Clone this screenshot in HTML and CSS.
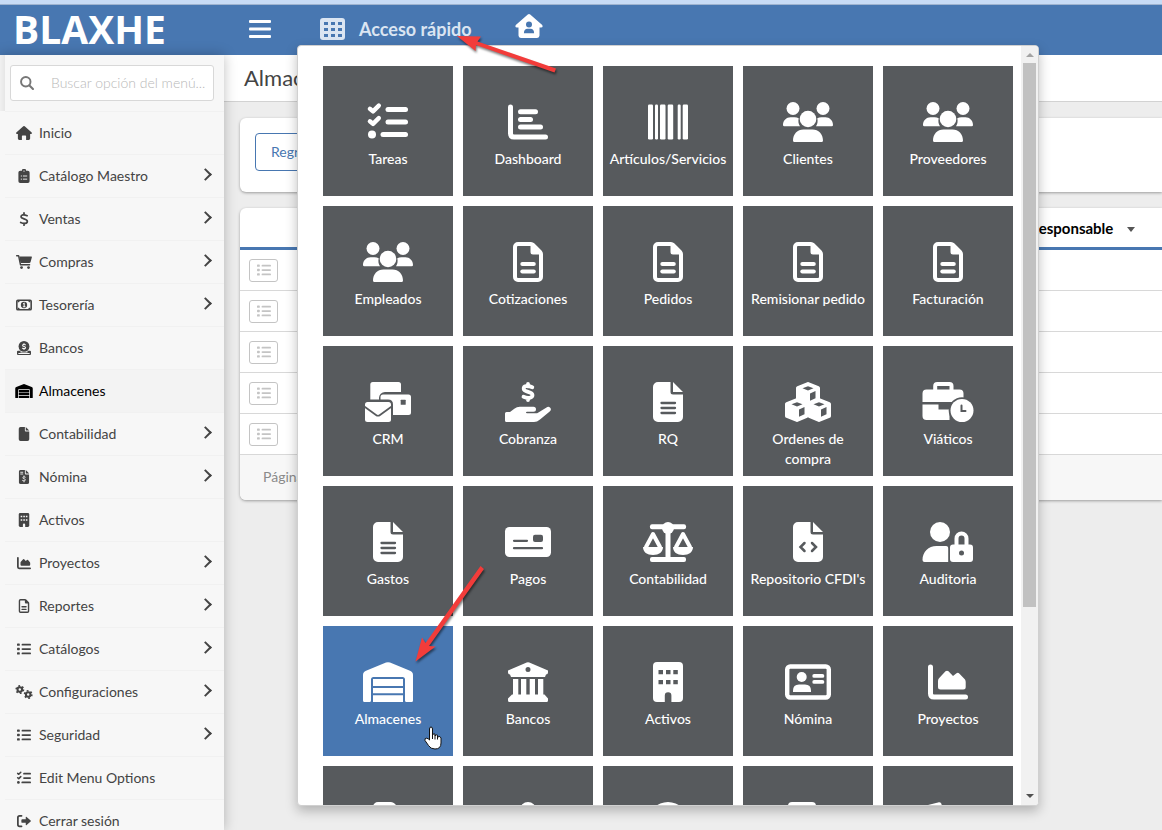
FILE: index.html
```html
<!DOCTYPE html>
<html lang="es">
<head>
  <meta charset="UTF-8">
  <meta name="viewport" content="width=device-width, initial-scale=1.0">
  <title>BLAXHE - Almacenes</title>
  <link rel="stylesheet" href="styles.css">
</head>
<body>
  <!-- iconos -->
  <svg class="sprite" aria-hidden="true">
    <symbol id="tasks" viewBox="0 0 40 40"><path class="line" stroke-width="4.4" d="M1.9 6.8L5 9.4 10.8 3.6M1.9 19.3L5 21.9 10.8 16.1"/><circle cx="4" cy="32.5" r="4"/><rect x="17.5" y="5" width="22.5" height="5" rx="2.5"/><rect x="17.5" y="17.5" width="22.5" height="5" rx="2.5"/><rect x="12.5" y="30" width="27.5" height="5" rx="2.5"/></symbol>
    <symbol id="chart-bar" viewBox="0 0 40 40"><path class="line" stroke-width="5" d="M2.5 5V31.5q0 3.5 3.5 3.5H37.5"/><rect x="10" y="7.3" width="20" height="5" rx="2.5"/><rect x="10" y="15" width="15" height="5" rx="2.5"/><rect x="10" y="22.5" width="25" height="5" rx="2.5"/></symbol>
    <symbol id="barcode" viewBox="0 0 40 40"><rect y="2.5" width="5" height="35" rx="1.2"/><rect x="7" y="2.5" width="3" height="35" rx="1.2"/><rect x="12" y="2.5" width="5.5" height="35" rx="1.2"/><rect x="19.7" y="2.5" width="5.5" height="35" rx="1.2"/><rect x="29.7" y="2.5" width="3" height="35" rx="1.2"/><rect x="34.7" y="2.5" width="5.3" height="35" rx="1.2"/></symbol>
    <symbol id="users" viewBox="0 0 50 40"><circle cx="10" cy="6.5" r="6.5"/><circle cx="40" cy="6.5" r="6.5"/><circle cx="25" cy="17" r="8.3"/><path d="M0 23C0 18.5 3.5 15.3 7.5 15.3h4c1.6 0 3 .3 4.2.9C15 19.5 15.5 22 17 24.3H1.3Q0 24.3 0 23ZM50 23C50 18.5 46.5 15.3 42.5 15.3h-4c-1.6 0-3 .3-4.2.9C35 19.5 34.5 22 33 24.3H48.7Q50 24.3 50 23ZM10 38.5C10 32 14.5 27.5 20.5 27.5h9C35.5 27.5 40 32 40 38.5q0 1.5-1.5 1.5h-27Q10 40 10 38.5Z"/></symbol>
    <symbol id="file-lines" viewBox="0 0 30 40"><path fill-rule="evenodd" d="M5 0H18Q20 0 21.5 1.5L28.5 8.5Q30 10 30 12V35a5 5 0 0 1-5 5H5a5 5 0 0 1-5-5V5a5 5 0 0 1 5-5ZM5 4Q4 4 4 5V35q0 1 1 1H25q1 0 1-1V12.5H20a2.5 2.5 0 0 1-2.5-2.5V4Z"/><rect x="7.3" y="20" width="15.5" height="4" rx="2"/><rect x="7.3" y="27.5" width="15.5" height="4" rx="2"/></symbol>
    <symbol id="file" viewBox="0 0 30 40"><path d="M5 0H17.5V10a2.5 2.5 0 0 0 2.5 2.5H30V35a5 5 0 0 1-5 5H5a5 5 0 0 1-5-5V5a5 5 0 0 1 5-5ZM20 0L30 10H20Z"/></symbol>
    <symbol id="file-text" viewBox="0 0 30 40"><use href="#file"/><path class="cut" stroke-width="2.3" d="M8.5 21h13.5M8.5 26h13.5M8.5 31h13.5"/></symbol>
    <symbol id="file-code" viewBox="0 0 30 40"><use href="#file"/><path class="cut" stroke-width="2.5" d="M11.5 21L7.5 25 11.5 29M19 21L23 25 19 29"/></symbol>
    <symbol id="file-dollar" viewBox="0 0 30 40"><use href="#file"/><path class="cut" stroke-width="2.5" d="M5.5 6.5h6M5.5 11.5h6M18.5 20.5c-4-1.5-7-.5-7 2 0 3 7.5 2 7.5 5.5 0 3-4 3.5-8 2M15 17v3M15 31v3"/></symbol>
    <symbol id="mails" viewBox="0 0 46 40"><path d="M7.8 0H33.5Q36 0 36 2.5V10H20a6 6 0 0 0-6 6v1.5H5.3V2.5Q5.3 0 7.8 0Z"/><path d="M18 12.5H43.5q2.5 0 2.5 2.5V30.5q0 2.5-2.5 2.5H28V22.5q0-5-5-5H15.5V15q0-2.5 2.5-2.5Z"/><rect y="20" width="26" height="20" rx="2.5"/><path class="cut" stroke-width="1.7" d="M0 25L11 33q2 1.5 4 0L26 25"/><rect class="hole" x="35.7" y="17.7" width="5" height="5" rx=".5"/></symbol>
    <symbol id="hand-dollar" viewBox="0 0 46 40"><path class="line" stroke-width="3.8" d="M27.3 5.3C22 3 18.5 4 18.7 6.8c.2 3.7 8.8 2.5 8.8 6.3 0 3-4.5 3.7-9 1.7M23 1.9v2.5M23 16v2.1"/><path d="M0 31.5Q0 30 1.5 30H5l4.3-3.3q2.5-2 5.5-2H28.5q2.5 0 2.5 2.5t-2.5 2.5H22q-1 0-1 .8t1 .8H31q1.2 0 2-.6L41.5 25.5q2-1.4 3.7.3 1.6 2-.5 3.7L35 37.5q-3 2.5-6 2.5H1.5Q0 40 0 38.5Z"/></symbol>
    <symbol id="cubes" viewBox="0 0 46 40"><path class="solid" stroke-width="4" d="M23 2L33 6V17L23 21 13 17V6ZM12 18L21.5 22V34L12 38 2 34V22ZM34 18L44 22V34L34 38 24.5 34V22Z"/><path class="hole" d="M17.5 6.3L23 4.2 28.5 6.3 23 8.6ZM25 11.5L30.5 9V16.3L25 18.7ZM6.5 22.3L12 20.2 17.5 22.3 12 24.6ZM14 27.5L19.5 25V32.3L14 34.7ZM28.5 22.3L34 20.2 39.5 22.3 34 24.6ZM36 27.5L41.5 25V32.3L36 34.7Z"/></symbol>
    <symbol id="briefcase" viewBox="0 0 51 40"><path fill-rule="evenodd" d="M10.7 7.6V4Q10.7 0 14.7 0H27Q31 0 31 4V7.6H37q4 0 4 4V20H0V11.6q0-4 4-4ZM14.7 4V7.6H27V4ZM0 22.5H16V27.5H27V38H4q-4 0-4-4Z"/><circle class="hole" cx="39.5" cy="28.5" r="13.3"/><circle cx="39.5" cy="28.5" r="11.5"/><path class="cut" stroke-width="2" d="M39 23.5V29H43"/></symbol>
    <symbol id="check-card" viewBox="0 0 46 40"><rect y="5" width="46" height="30" rx="4.5"/><path class="cut" stroke-width="2.2" d="M9 18.8H22M9 26.2H37"/><rect class="hole" x="28" y="12.7" width="10" height="7.3" rx="2"/></symbol>
    <symbol id="scale" viewBox="0 0 50 40"><rect x="7" y="2.2" width="36" height="5" rx="2"/><circle cx="25" cy="6" r="6"/><rect x="22.5" y="8" width="5" height="29"/><rect x="7" y="35" width="36" height="5" rx="2"/><path class="line" stroke-width="4" d="M3 25L10 12 17 25M33 25L40 12 47 25"/><path d="M0 25H20C20 30 16 33 10 33S0 30 0 25ZM30 25H50C50 30 46 33 40 33S30 30 30 25Z"/></symbol>
    <symbol id="user-lock" viewBox="0 0 51 40"><circle cx="17.5" cy="10" r="10"/><path d="M0 38C0 30 6 24 14 24H23.5Q26 24 25.7 27V40H2Q0 40 0 38Z"/><path class="line" stroke-width="4" d="M34 24V16.5a5 5 0 0 1 10 0V24"/><rect x="27.5" y="22.5" width="23" height="17.5" rx="3"/><circle class="hole" cx="39" cy="31" r="2.5"/></symbol>
    <symbol id="warehouse" viewBox="0 0 50 40"><path d="M0 38.5V13Q0 10 3 8.8L23 .6Q25-.2 27 .6L47 8.8Q50 10 50 13V38.5Q50 40 48.5 40H43.5Q42 40 42 38.5V17.5Q42 15 39.5 15H10.5Q8 15 8 17.5V38.5Q8 40 6.5 40H1.5Q0 40 0 38.5ZM10 17H40V24H10ZM10 26H40V31.3H10ZM10 33.3H40V40H10Z"/></symbol>
    <symbol id="bank" viewBox="0 0 40 40"><path fill-rule="evenodd" d="M0 8.5L18.7.5Q20 0 21.3.5L40 8.5V10.5Q40 12.5 38 12.5L37 15H3L2 12.5Q0 12.5 0 10.5ZM20 5a2.5 2.5 0 1 0 0 5 2.5 2.5 0 0 0 0-5Z"/><path d="M5 17h5.3V33H5ZM13 17h5.3V33H13ZM21.7 17H27V33H21.7ZM30 17h5.3V33H30ZM4 32.5H36.5L40 36.5V38.5q0 1.5-1.5 1.5h-37Q0 40 0 38.5V36.5Z"/></symbol>
    <symbol id="building" viewBox="0 0 30 40"><rect width="30" height="40" rx="4"/><path class="hole" d="M5.5 8h4.5v4.2H5.5ZM13 8h4.5v4.2H13ZM20.3 8h4.5v4.2H20.3ZM5.5 18h4.5v4.2H5.5ZM13 18h4.5v4.2H13ZM20.3 18h4.5v4.2H20.3ZM11.8 40V33.5a3.3 3.3 0 0 1 6.6 0V40Z"/></symbol>
    <symbol id="id-card" viewBox="0 0 46 40"><rect class="line" x="2.2" y="4.5" width="41.6" height="31" rx="3" stroke-width="4.4"/><circle cx="16.7" cy="15" r="5"/><path d="M8 28.5Q8 22.5 14 22.5H20Q26 22.5 26 28.5V30H8Z"/><rect x="27.3" y="12" width="12" height="3.8" rx="1.9"/><rect x="27.3" y="18" width="12" height="3.8" rx="1.9"/></symbol>
    <symbol id="chart-area" viewBox="0 0 40 40"><path class="line" stroke-width="5" d="M2.5 5V31.5q0 3.5 3.5 3.5H37.5"/><path d="M10 19q0-1.5 1-2.8L17.5 9.3q1.5-1.3 3 0L25 14 28.5 11.2q1.5-1 3 .5L37 17.5q.7 1 .7 2.5V25q0 2.5-2.5 2.5H12.5Q10 27.5 10 25Z"/></symbol>
    <symbol id="user" viewBox="0 0 34 40"><circle cx="17" cy="8" r="8"/><path d="M0 40Q0 20 17 20T34 40Z"/></symbol>
    <symbol id="globe" viewBox="0 0 40 40"><circle cx="20" cy="20" r="20"/></symbol>
    <symbol id="calc" viewBox="0 0 40 40"><rect x="0" width="28" height="40" rx="4"/></symbol>
    <symbol id="tag" viewBox="0 0 40 40"><path d="M0 3L11 .2Q13 0 13.5 2L18 40H5Z"/></symbol>
    <symbol id="home" viewBox="0 0 46 40"><path d="M21 .8Q23-.8 25 .8L45 18.5Q47 22.5 43 22.5H40.5V36q0 4-4 4H29V29q0-2-2-2H19q-2 0-2 2V40H9.5q-4 0-4-4V22.5H3Q-1 22.5 1 18.5Z"/></symbol>
    <symbol id="home-user" viewBox="0 0 46 40"><path d="M21 .8Q23-.8 25 .8L45 18.5Q47 22.5 43 22.5H40.5V36q0 4-4 4H9.5q-4 0-4-4V22.5H3Q-1 22.5 1 18.5Z"/><circle class="hole" cx="23" cy="17.5" r="5"/><path class="hole" d="M14.5 32Q14.5 24.5 20.5 24.5H25.5Q31.5 24.5 31.5 32Z"/></symbol>
    <symbol id="clipboard" viewBox="0 0 32 40"><path d="M5 5H10a6 6 0 0 1 12 0H27q5 0 5 5V35q0 5-5 5H5q-5 0-5-5V10Q0 5 5 5Z"/><circle class="hole" cx="16" cy="6" r="2"/><path class="cut" stroke-width="2.6" d="M8 20h1M14 20h10M8 29h1M14 29h10"/></symbol>
    <symbol id="dollar" viewBox="0 0 26 40"><path class="line" stroke-width="5" d="M22 10.5C12 6 4.5 8 4.5 13.5c0 7 18 5 18 13 0 7-9 8-19 3.5M13 2.5V8M13 32v5.5"/></symbol>
    <symbol id="cart" viewBox="0 0 46 40"><path class="line" stroke-width="4" d="M2 2H7.5L13 28H39"/><path d="M9.5 4H44q2 0 1.7 2L42 19.5Q41.3 23 38 23H13Z"/><circle cx="16" cy="36" r="4"/><circle cx="36" cy="36" r="4"/></symbol>
    <symbol id="money" viewBox="0 0 46 40"><rect class="line" x="2.5" y="6.5" width="41" height="27" rx="3" stroke-width="4.5"/><circle cx="23" cy="20" r="9"/><path d="M5 8h6q0 5-6 5ZM41 8h-6q0 5 6 5ZM5 32h6q0-5-6-5ZM41 32h-6q0-5 6-5Z"/><path class="cut" stroke-width="3" d="M21.5 16.5L23.5 15.5V24M21 25h5"/></symbol>
    <symbol id="coin" viewBox="0 0 40 40"><path d="M3 28H10V33H30V28H37q3 0 3 3V37q0 3-3 3H3q-3 0-3-3V31q0-3 3-3Z"/><circle cx="20" cy="15.5" r="15.5"/><path class="cut" stroke-width="3" d="M24 11c-5-2-8-1-8 1.5 0 4 8.5 2.5 8.5 6.5 0 3-4.5 3.5-9 1.5M20 7v3M20 21v3M5 35.5H35"/></symbol>
    <symbol id="list" viewBox="0 0 40 40"><rect y="4" width="8" height="7" rx="2"/><rect y="16.5" width="8" height="7" rx="2"/><rect y="29" width="8" height="7" rx="2"/><rect x="13" y="5" width="27" height="5" rx="2.5"/><rect x="13" y="17.5" width="27" height="5" rx="2.5"/><rect x="13" y="30" width="27" height="5" rx="2.5"/></symbol>
    <symbol id="gears" viewBox="0 0 50 40"><circle class="line" cx="13" cy="13" r="6.5" stroke-width="6"/><circle class="teeth" cx="13" cy="13" r="10.5" stroke-width="4.5"/><circle class="line" cx="37" cy="27" r="6.5" stroke-width="6"/><circle class="teeth" cx="37" cy="27" r="10.5" stroke-width="4.5"/></symbol>
    <symbol id="logout" viewBox="0 0 40 40"><path class="line" stroke-width="5" d="M13 5H7.5Q2.5 5 2.5 10V30Q2.5 35 7.5 35H13"/><path d="M25 8.5Q26 7.5 27.5 8.5L39 18.5Q40.5 20 39 21.5L27.5 31.5Q25 33 25 30V25H15q-2.5 0-2.5-2.5v-5Q12.5 15 15 15H25Z"/></symbol>
    <symbol id="search" viewBox="0 0 40 40"><circle class="line" cx="16.5" cy="16.5" r="13.5" stroke-width="5.5"/><path class="line" stroke-width="6" d="M27 27L37 37"/></symbol>
    <symbol id="grid" viewBox="0 0 25 22"><rect width="25" height="22" rx="3"/><path class="hole" d="M4 4h4v3H4ZM11 4h4v3h-4ZM18 4h4v3h-4ZM4 10h4v3H4ZM11 10h4v3h-4ZM18 10h4v3h-4ZM4 16h4v3H4ZM11 16h4v3h-4ZM18 16h4v3h-4Z"/></symbol>
    <symbol id="bars" viewBox="0 0 22 18"><rect width="22" height="3" rx="1"/><rect y="7.5" width="22" height="3" rx="1"/><rect y="15" width="22" height="3" rx="1"/></symbol>
  </svg>

  <header class="topbar">
    <a href="#" class="logo">BLAXHE</a>
    <button type="button" class="menu-btn" aria-label="Menú"><svg><use href="#bars"/></svg></button>
    <button type="button" class="quick-btn"><svg><use href="#grid"/></svg>Acceso rápido</button>
    <a href="#" class="home-btn" aria-label="Inicio"><svg><use href="#home-user"/></svg></a>
  </header>

  <div class="layout">
    <aside class="sidebar">
      <div class="search">
        <label for="buscar" aria-label="Buscar"><svg><use href="#search"/></svg></label>
        <input type="text" id="buscar" placeholder="Buscar opción del menú...">
      </div>
      <nav class="menu">
        <a href="#"><svg><use href="#home"/></svg>Inicio</a>
        <a href="#" class="sub"><svg><use href="#clipboard"/></svg>Catálogo Maestro</a>
        <a href="#" class="sub"><svg><use href="#dollar"/></svg>Ventas</a>
        <a href="#" class="sub"><svg><use href="#cart"/></svg>Compras</a>
        <a href="#" class="sub"><svg><use href="#money"/></svg>Tesorería</a>
        <a href="#"><svg><use href="#coin"/></svg>Bancos</a>
        <a href="#" class="active"><svg><use href="#warehouse"/></svg>Almacenes</a>
        <a href="#" class="sub"><svg><use href="#file"/></svg>Contabilidad</a>
        <a href="#" class="sub"><svg><use href="#file-dollar"/></svg>Nómina</a>
        <a href="#"><svg><use href="#building"/></svg>Activos</a>
        <a href="#" class="sub"><svg><use href="#chart-area"/></svg>Proyectos</a>
        <a href="#" class="sub"><svg><use href="#file-lines"/></svg>Reportes</a>
        <a href="#" class="sub"><svg><use href="#list"/></svg>Catálogos</a>
        <a href="#" class="sub"><svg><use href="#gears"/></svg>Configuraciones</a>
        <a href="#" class="sub"><svg><use href="#list"/></svg>Seguridad</a>
        <a href="#"><svg><use href="#tasks"/></svg>Edit Menu Options</a>
        <a href="#"><svg><use href="#logout"/></svg>Cerrar sesión</a>
      </nav>
    </aside>

    <main class="content">
      <h1>Almacenes</h1>
      <section class="card toolbar">
        <button type="button" class="back-btn">Regresar</button>
      </section>
      <section class="card">
        <table>
          <thead>
            <tr><th></th><th class="col-resp">Responsable <span class="caret"></span></th></tr>
          </thead>
          <tbody>
            <tr><td><button type="button" class="row-btn" aria-label="Opciones"><svg><use href="#list"/></svg></button></td><td></td></tr>
            <tr><td><button type="button" class="row-btn" aria-label="Opciones"><svg><use href="#list"/></svg></button></td><td></td></tr>
            <tr><td><button type="button" class="row-btn" aria-label="Opciones"><svg><use href="#list"/></svg></button></td><td></td></tr>
            <tr><td><button type="button" class="row-btn" aria-label="Opciones"><svg><use href="#list"/></svg></button></td><td></td></tr>
            <tr><td><button type="button" class="row-btn" aria-label="Opciones"><svg><use href="#list"/></svg></button></td><td></td></tr>
          </tbody>
        </table>
        <div class="pager">Página</div>
      </section>
    </main>
  </div>

  <!-- panel de acceso rápido -->
  <div class="quick-panel">
    <div class="tiles">
      <a href="#" class="tile"><svg><use href="#tasks"/></svg>Tareas</a>
      <a href="#" class="tile"><svg><use href="#chart-bar"/></svg>Dashboard</a>
      <a href="#" class="tile"><svg><use href="#barcode"/></svg>Artículos/Servicios</a>
      <a href="#" class="tile"><svg><use href="#users"/></svg>Clientes</a>
      <a href="#" class="tile"><svg><use href="#users"/></svg>Proveedores</a>
      <a href="#" class="tile"><svg><use href="#users"/></svg>Empleados</a>
      <a href="#" class="tile"><svg><use href="#file-lines"/></svg>Cotizaciones</a>
      <a href="#" class="tile"><svg><use href="#file-lines"/></svg>Pedidos</a>
      <a href="#" class="tile"><svg><use href="#file-lines"/></svg>Remisionar pedido</a>
      <a href="#" class="tile"><svg><use href="#file-lines"/></svg>Facturación</a>
      <a href="#" class="tile"><svg><use href="#mails"/></svg>CRM</a>
      <a href="#" class="tile"><svg><use href="#hand-dollar"/></svg>Cobranza</a>
      <a href="#" class="tile"><svg><use href="#file-text"/></svg>RQ</a>
      <a href="#" class="tile"><svg><use href="#cubes"/></svg>Ordenes de<br>compra</a>
      <a href="#" class="tile"><svg><use href="#briefcase"/></svg>Viáticos</a>
      <a href="#" class="tile"><svg><use href="#file-text"/></svg>Gastos</a>
      <a href="#" class="tile"><svg><use href="#check-card"/></svg>Pagos</a>
      <a href="#" class="tile"><svg><use href="#scale"/></svg>Contabilidad</a>
      <a href="#" class="tile"><svg><use href="#file-code"/></svg>Repositorio CFDI's</a>
      <a href="#" class="tile"><svg><use href="#user-lock"/></svg>Auditoria</a>
      <a href="#" class="tile current"><svg><use href="#warehouse"/></svg>Almacenes</a>
      <a href="#" class="tile"><svg><use href="#bank"/></svg>Bancos</a>
      <a href="#" class="tile"><svg><use href="#building"/></svg>Activos</a>
      <a href="#" class="tile"><svg><use href="#id-card"/></svg>Nómina</a>
      <a href="#" class="tile"><svg><use href="#chart-area"/></svg>Proyectos</a>
      <a href="#" class="tile"><svg><use href="#file-lines"/></svg></a>
      <a href="#" class="tile"><svg><use href="#user"/></svg></a>
      <a href="#" class="tile"><svg><use href="#globe"/></svg></a>
      <a href="#" class="tile"><svg><use href="#calc"/></svg></a>
      <a href="#" class="tile"><svg><use href="#tag"/></svg></a>
    </div>
    <div class="scrollbar">
      <span class="up"></span>
      <span class="thumb"></span>
      <span class="down"></span>
    </div>
  </div>

  <!-- flechas y cursor -->
  <svg class="arrow arrow-top" viewBox="0 0 110 50"><path d="M7 6L31 6.5 27.5 11.5 106 38.5 104.5 42.5 26 15 25.5 21Z"/></svg>
  <svg class="arrow arrow-tile" viewBox="0 0 80 105"><path d="M5.5 101.5L12 77.5 15.5 83 70.5 6 74 9 19 86 25.5 86.5Z"/></svg>
  <svg class="cursor" viewBox="0 0 18 24"><path d="M5.5 14V3Q5.5 1 7 1T8.5 3V9.5Q9 7 11 8V10Q12 8 13.5 9.2V11Q16.5 9.5 17 12V17Q17 23 11 23 6.5 23 4.5 19.5L1 14.5Q.5 12 2.5 12.2Q4.5 12.5 5.5 14Z"/><path d="M8.5 9v4M11 9.5v4M13.5 10.5v3"/></svg>
</body>
</html>
```
FILE: styles.css
```css
* {
  box-sizing: border-box;
}
body {
  --hole: #f7f7f7;
  display: flex;
  flex-direction: column;
  height: 100vh;
  margin: 0;
  overflow: hidden;
  position: relative;
  font-family: Lato, "Open Sans", sans-serif;
  font-size: 14px;
  line-height: 20px;
  color: #444;
  background-color: #ededed;
}
a {
  color: inherit;
  text-decoration: none;
}
button {
  font: inherit;
  cursor: pointer;
}
svg {
  display: block;
  flex: none;
  fill: currentColor;
}
.sprite {
  position: absolute;
  width: 0;
  height: 0;
}
.line {
  fill: none;
  stroke: currentColor;
  stroke-linecap: round;
  stroke-linejoin: round;
}
.teeth {
  fill: none;
  stroke: currentColor;
  stroke-dasharray: 5 6;
}
.solid {
  stroke: currentColor;
  stroke-linejoin: round;
}
.hole {
  fill: var(--hole);
}
.cut {
  fill: none;
  stroke: var(--hole);
  stroke-linecap: round;
}

/* barra superior */
.topbar {
  --hole: #4877b1;
  display: flex;
  flex: none;
  align-items: center;
  height: 55px;
  padding: 0 0 2px 13px;
  border-top: 4px solid #c8dbf5;
  background-color: #4877b1;
  box-shadow: inset 0 1px #9fb3cf;
  color: #fff;
}
.logo {
  width: 236px;
  font-family: "Open Sans", sans-serif;
  font-size: 39px;
  font-weight: bold;
  line-height: 48px;
}
.menu-btn, .quick-btn {
  padding: 0;
  border: none;
  background: none;
  color: #fff;
}
.menu-btn {
  margin-right: 49px;
}
.menu-btn svg {
  width: 22px;
  height: 18px;
}
.quick-btn {
  display: flex;
  align-items: center;
  gap: 14px;
  width: 195px;
  color: #dbe5f2;
  font-size: 18px;
  font-weight: bold;
}
.quick-btn svg {
  width: 25px;
  height: 22px;
}
.home-btn svg {
  width: 28px;
  height: 24px;
  margin-bottom: 5px;
}

.layout {
  display: flex;
  flex: 1;
  min-height: 0;
}

/* menú lateral */
.sidebar {
  flex: none;
  width: 224px;
  overflow: hidden;
  background: linear-gradient(to right, #f0f0f0, #e6e6e6) no-repeat 0 0 / 5px 56px #f7f7f7;
  box-shadow: 0 0 12px rgba(0, 0, 0, 0.25);
  z-index: 1;
}
.search {
  display: flex;
  align-items: center;
  height: 36px;
  margin: 10px 10px;
  padding-left: 9px;
  border: 1px solid #d8d8d8;
  border-radius: 3px;
  background-color: #fff;
}
.search svg {
  width: 14px;
  height: 14px;
  color: #777;
}
.search input {
  flex: 1;
  min-width: 0;
  padding: 0 0 0 17px;
  border: none;
  outline: none;
  background: none;
  font: inherit;
}
.search input::placeholder {
  color: #b8b8b8;
  font-weight: 300;
}
.menu {
  margin-left: 5px;
}
.menu a {
  display: flex;
  align-items: center;
  height: 43px;
  padding: 0 13px 0 9px;
  border-top: 1px solid #f1f1f1;
}
.menu svg {
  width: 20px;
  height: 14px;
  margin-right: 5px;
}
.menu .active {
  background-color: #f3f3f3;
  color: #000;
}
.menu .sub::after {
  content: "";
  width: 7px;
  height: 7px;
  margin: 0 1px 4px auto;
  border: solid #444;
  border-width: 2px 2px 0 0;
  transform: rotate(45deg);
}

/* contenido */
.content {
  flex: 1;
  min-width: 0;
}
h1 {
  margin: 0 0 16px;
  padding: 8px 20px;
  border-bottom: 1px solid #d2d2d2;
  background-color: #fff;
  font-size: 22px;
  font-weight: normal;
  line-height: 30px;
}
.card {
  margin: 0 0 16px 16px;
  overflow: hidden;
  border-radius: 6px 0 0 6px;
  background-color: #fff;
  box-shadow: 0 1px 3px rgba(0, 0, 0, 0.35);
}
.toolbar {
  padding: 15px 15px 21px;
}
.back-btn {
  height: 38px;
  padding: 0 15px;
  border: 1px solid #4877b1;
  border-radius: 4px;
  background-color: #fff;
  color: #4877b1;
}
table {
  width: 100%;
  border-collapse: separate;
  border-spacing: 0;
}
th {
  height: 42px;
  padding: 0;
  border-bottom: 3px solid #4877b1;
  color: #000;
  font-size: 15px;
}
.col-resp {
  width: 142px;
  padding-right: 27px;
  text-align: right;
}
.caret {
  display: inline-block;
  margin-left: 10px;
  border: 4px solid transparent;
  border-top: 5px solid #555;
  border-bottom: none;
  vertical-align: middle;
}
td {
  height: 41px;
  padding: 0 9px;
  border-bottom: 1px solid #d8d8d8;
}
.row-btn {
  display: flex;
  align-items: center;
  justify-content: center;
  width: 29px;
  height: 23px;
  padding: 0;
  border: 1px solid #c4c4c4;
  border-radius: 3px;
  background-color: #fff;
  color: #c4c4c4;
}
.row-btn svg {
  width: 14px;
  height: 14px;
}
.pager {
  padding: 12px 23px 13px;
  background-color: #f7f7f7;
  color: #8a8a8a;
}

/* acceso rápido */
.quick-panel {
  position: absolute;
  top: 45px;
  bottom: 24px;
  left: 297px;
  display: flex;
  overflow: hidden;
  border: 1px solid #d0d0d0;
  border-radius: 4px;
  background-color: #fff;
  box-shadow: 0 5px 12px rgba(0, 0, 0, 0.25);
  z-index: 2;
}
.tiles {
  --hole: #575a5d;
  display: grid;
  grid-template-columns: repeat(5, 130px);
  grid-auto-rows: 130px;
  gap: 10px;
  padding: 20px 8px 0 25px;
}
.tile {
  padding-top: 36px;
  background-color: #575a5d;
  color: #fff;
  font-weight: 500;
  text-align: center;
}
.tile svg {
  width: 52px;
  height: 40px;
  margin: 0 auto 7px;
}
.current {
  --hole: #4877b1;
  background-color: #4877b1;
}
.scrollbar {
  display: flex;
  flex-direction: column;
  align-items: center;
  width: 17px;
  padding: 7px 0;
  background-color: #f1f1f1;
}
.up, .down {
  border: 4px solid transparent;
}
.up {
  border-top: none;
  border-bottom: 4px solid #a3a3a3;
  margin-bottom: 6px;
}
.down {
  margin-top: auto;
  border-bottom: none;
  border-top: 4px solid #505050;
}
.thumb {
  width: 13px;
  height: 73%;
  background-color: #c1c1c1;
}

.arrow, .cursor {
  position: absolute;
  z-index: 3;
  pointer-events: none;
}
.arrow {
  fill: #f23c3a;
  filter: drop-shadow(1px 2px 1px rgba(0, 0, 0, 0.5));
}
.arrow-top {
  top: 30px;
  left: 450px;
  width: 110px;
}
.arrow-tile {
  top: 560px;
  left: 410px;
  width: 80px;
}
.cursor {
  top: 726px;
  left: 424px;
  width: 18px;
  fill: #fff;
  stroke: #111;
}
```
